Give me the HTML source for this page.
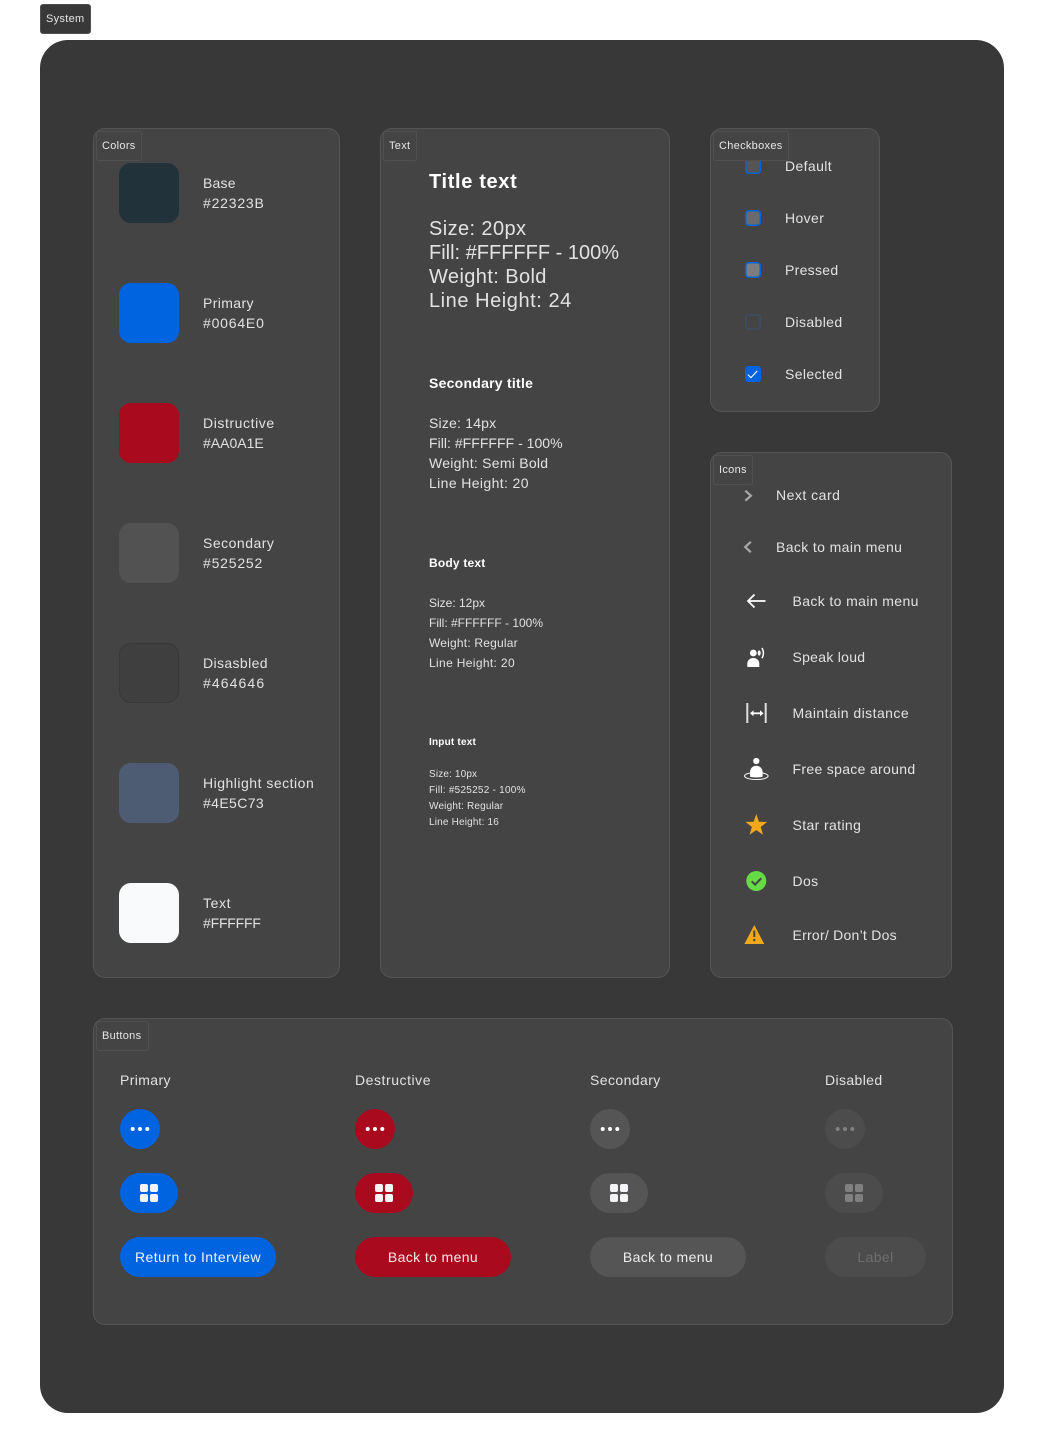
<!DOCTYPE html>
<html lang="en">
<head>
<meta charset="utf-8">
<title>System</title>
<style>
html,body{margin:0;padding:0;background:#fff;}
body{position:relative;width:1044px;height:1453px;overflow:hidden;font-family:"Liberation Sans",sans-serif;}
.a{position:absolute;box-sizing:border-box;}
.outer{left:40px;top:40px;width:964px;height:1373px;background:#383838;border-radius:28px;}
.panel{background:#444;border:1px solid #555;border-radius:12px;}
.tag{font-size:11px;line-height:28px;height:30px;color:#e6e6e6;border:1px solid #505050;border-radius:3px;padding-left:5px;letter-spacing:.3px;background:#444;white-space:nowrap;}
.t{position:absolute;white-space:nowrap;color:#e2e2e2;font-size:14px;line-height:20px;height:20px;letter-spacing:.38px;}
.sw{position:absolute;left:119px;width:60px;height:60px;border-radius:12px;}
.b{position:absolute;height:40px;border-radius:20px;}
.l{position:absolute;height:40px;line-height:40px;font-size:14px;letter-spacing:.38px;white-space:nowrap;text-align:center;}
.h{font-size:20px;line-height:24px;height:24px;}
svg{position:absolute;left:0;top:0;overflow:visible;}
</style>
</head>
<body>
<div class="a tag" style="left:40px;top:4px;width:51px;background:#383838;color:#e6e6e6;">System</div>
<div class="a outer"></div>

<div class="a panel" style="left:93px;top:128px;width:247px;height:850px;"></div>
<div class="a panel" style="left:380px;top:128px;width:290px;height:850px;"></div>
<div class="a panel" style="left:710px;top:128px;width:170px;height:284px;"></div>
<div class="a panel" style="left:710px;top:452px;width:242px;height:526px;"></div>
<div class="a panel" style="left:93px;top:1018px;width:860px;height:307px;"></div>

<!-- Colors -->
<div class="sw" style="top:163px;background:#22323B;"></div>
<div class="sw" style="top:283px;background:#0064E0;"></div>
<div class="sw" style="top:403px;background:#AA0A1E;"></div>
<div class="sw" style="top:523px;background:#525252;"></div>
<div class="sw" style="top:643px;background:#3F3F3F;border:1px solid #383838;box-sizing:border-box;"></div>
<div class="sw" style="top:763px;background:#4E5C73;"></div>
<div class="sw" style="top:883px;background:#F9FAFC;"></div>
<div class="t" style="left:203px;top:173px;letter-spacing:.2px;">Base</div>
<div class="t" style="left:203px;top:193px;letter-spacing:.8px;">#22323B</div>
<div class="t" style="left:203px;top:293px;">Primary</div>
<div class="t" style="left:203px;top:313px;letter-spacing:.8px;">#0064E0</div>
<div class="t" style="left:203px;top:413px;letter-spacing:.58px;">Distructive</div>
<div class="t" style="left:203px;top:433px;letter-spacing:0;">#AA0A1E</div>
<div class="t" style="left:203px;top:533px;letter-spacing:.5px;">Secondary</div>
<div class="t" style="left:203px;top:553px;letter-spacing:.8px;">#525252</div>
<div class="t" style="left:203px;top:653px;">Disasbled</div>
<div class="t" style="left:203px;top:673px;letter-spacing:1.1px;">#464646</div>
<div class="t" style="left:203px;top:773px;letter-spacing:.5px;">Highlight section</div>
<div class="t" style="left:203px;top:793px;">#4E5C73</div>
<div class="t" style="left:203px;top:893px;letter-spacing:.6px;">Text</div>
<div class="t" style="left:203px;top:913px;letter-spacing:-.2px;">#FFFFFF</div>
<div class="a tag" style="left:96px;top:131px;width:46px;">Colors</div>

<!-- Text -->
<div class="a tag" style="left:383px;top:131px;width:34px;">Text</div>
<div class="t h" style="left:429px;top:170px;font-weight:bold;color:#fff;letter-spacing:.65px;">Title text</div>
<div class="t h" style="left:429px;top:217px;letter-spacing:.4px;">Size: 20px</div>
<div class="t h" style="left:429px;top:241px;letter-spacing:0;">Fill: #FFFFFF - 100%</div>
<div class="t h" style="left:429px;top:265px;letter-spacing:.4px;">Weight: Bold</div>
<div class="t h" style="left:429px;top:289px;letter-spacing:.55px;">Line Height: 24</div>
<div class="t" style="left:429px;top:373px;font-weight:bold;color:#fff;letter-spacing:.25px;">Secondary title</div>
<div class="t" style="left:429px;top:413px;letter-spacing:.2px;">Size: 14px</div>
<div class="t" style="left:429px;top:433px;letter-spacing:.03px;">Fill: #FFFFFF - 100%</div>
<div class="t" style="left:429px;top:453px;letter-spacing:.26px;">Weight: Semi Bold</div>
<div class="t" style="left:429px;top:473px;">Line Height: 20</div>
<div class="t" style="left:429px;top:553px;font-size:12px;font-weight:bold;color:#fff;letter-spacing:.2px;">Body text</div>
<div class="t" style="left:429px;top:593px;font-size:12px;letter-spacing:0;">Size: 12px</div>
<div class="t" style="left:429px;top:613px;font-size:12px;letter-spacing:0;">Fill: #FFFFFF - 100%</div>
<div class="t" style="left:429px;top:633px;font-size:12px;letter-spacing:.2px;">Weight: Regular</div>
<div class="t" style="left:429px;top:653px;font-size:12px;letter-spacing:.35px;">Line Height: 20</div>
<div class="t" style="left:429px;top:733px;font-size:10px;font-weight:bold;color:#fff;letter-spacing:.2px;">Input text</div>
<div class="t" style="left:429px;top:765px;font-size:10px;letter-spacing:.15px;">Size: 10px</div>
<div class="t" style="left:429px;top:781px;font-size:10px;letter-spacing:.25px;">Fill: #525252 - 100%</div>
<div class="t" style="left:429px;top:797px;font-size:10px;letter-spacing:.18px;">Weight: Regular</div>
<div class="t" style="left:429px;top:813px;font-size:10px;letter-spacing:.18px;">Line Height: 16</div>

<!-- Checkboxes -->
<svg width="1044" height="1453">
  <rect x="745.75" y="158.75" width="14.5" height="14.5" rx="3" fill="#555" stroke="#0064E0" stroke-width="1.5"/>
  <rect x="745.75" y="210.75" width="14.5" height="14.5" rx="3" fill="#6a6a6a" stroke="#0064E0" stroke-width="1.5"/>
  <rect x="745.75" y="262.75" width="14.5" height="14.5" rx="3" fill="#7d7d7d" stroke="#0064E0" stroke-width="1.5"/>
  <rect x="745.75" y="314.75" width="14.5" height="14.5" rx="3" fill="#444" stroke="#3f4d63" stroke-width="1.5"/>
  <rect x="745" y="366" width="16" height="16" rx="3" fill="#0064E0"/>
  <path d="M747.8 374.6l3.2 3 6.2-6.6" fill="none" stroke="#fff" stroke-width="1.1"/>
</svg>
<div class="a tag" style="left:713px;top:131px;width:76px;">Checkboxes</div>
<div class="t" style="left:785px;top:156px;">Default</div>
<div class="t" style="left:785px;top:208px;">Hover</div>
<div class="t" style="left:785px;top:260px;letter-spacing:.3px;">Pressed</div>
<div class="t" style="left:785px;top:312px;">Disabled</div>
<div class="t" style="left:785px;top:364px;">Selected</div>

<!-- Icons -->
<div class="a tag" style="left:713px;top:455px;width:40px;">Icons</div>
<div class="t" style="left:776px;top:485px;letter-spacing:.5px;">Next card</div>
<div class="t" style="left:776px;top:537px;">Back to main menu</div>
<div class="t" style="left:792.5px;top:591px;">Back to main menu</div>
<div class="t" style="left:792.5px;top:647px;letter-spacing:.28px;">Speak loud</div>
<div class="t" style="left:792.5px;top:703px;letter-spacing:.45px;">Maintain distance</div>
<div class="t" style="left:792.5px;top:759px;letter-spacing:.32px;">Free space around</div>
<div class="t" style="left:792.5px;top:815px;">Star rating</div>
<div class="t" style="left:792.5px;top:871px;">Dos</div>
<div class="t" style="left:792.5px;top:925px;letter-spacing:.25px;">Error/ Don’t Dos</div>
<svg width="1044" height="1453">
  <path d="M745.3 490.7l5.6 5-5.6 5" fill="none" stroke="#a8a8a8" stroke-width="2.2"/>
  <path d="M750.8 541.8l-5.6 5.2 5.600 5.200" fill="none" stroke="#a8a8a8" stroke-width="2.2"/>
  <path d="M765.5 601H748M754.5 594.500L748 601l6.500 6.500" fill="none" stroke="#fff" stroke-width="1.8"/>
  <circle cx="753.3" cy="653" r="3.4" fill="#fff"/>
  <ellipse cx="759.2" cy="653" rx="1.5" ry="2.6" fill="#fff"/>
  <path d="M747.3 667v-3.200c0-3.500 2.700-5.800 6-5.800s6 2.300 6 5.800V667z" fill="#fff"/>
  <path d="M762 648c1.800 3.200 1.800 7 0 10.200" fill="none" stroke="#fff" stroke-width="1.5"/>
  <path d="M747.3 703v20M765.7 703v20" fill="none" stroke="#dedede" stroke-width="2"/>
  <path d="M752 713.3h9.500" fill="none" stroke="#fff" stroke-width="1.800"/>
  <path d="M750 713.3l3.500-3v6zM763.500 713.3l-3.500-3v6z" fill="#fff"/>
  <circle cx="756.3" cy="761" r="3.1" fill="#fff"/>
  <ellipse cx="756.3" cy="776" rx="11.800" ry="3.500" fill="none" stroke="#f0f0f0" stroke-width="1.100"/>
  <path d="M750 776.800v-4.500c0-3.600 2.700-6.500 6.300-6.500s6.300 2.900 6.300 6.500v4.500c-3 .9-9.600.9-12.600 0z" fill="#fff"/>
  <path d="M756.300 814l2.700 7.800 8.200.1-6.500 5.100 2.400 7.800-6.800-4.700-6.800 4.700 2.400-7.800-6.500-5.100 8.200-.1z" fill="#F2A81B"/>
  <circle cx="756.300" cy="881" r="10" fill="#66DB45"/>
  <path d="M751.700 881.300l3.400 3.300 6.200-6.400" fill="none" stroke="#444" stroke-width="2"/>
  <path d="M754.300 925l9.900 19h-19.800z" fill="#F2A81B"/>
  <path d="M754.300 930.500v6.500" stroke="#444" stroke-width="2" fill="none"/>
  <circle cx="754.300" cy="940" r="1.200" fill="#444"/>
</svg>

<!-- Buttons -->
<div class="a tag" style="left:96px;top:1021px;width:53px;">Buttons</div>
<div class="t" style="left:120px;top:1070px;">Primary</div>
<div class="t" style="left:355px;top:1070px;letter-spacing:.55px;">Destructive</div>
<div class="t" style="left:590px;top:1070px;letter-spacing:.42px;">Secondary</div>
<div class="t" style="left:825px;top:1070px;">Disabled</div>

<div class="b" style="left:120px;top:1109px;width:40px;background:#0064E0;"></div>
<div class="b" style="left:355px;top:1109px;width:40px;background:#AA0A1E;"></div>
<div class="b" style="left:590px;top:1109px;width:40px;background:#555;"></div>
<div class="b" style="left:825px;top:1109px;width:40px;background:#4c4c4c;"></div>
<div class="b" style="left:120px;top:1173px;width:58px;background:#0064E0;"></div>
<div class="b" style="left:355px;top:1173px;width:58px;background:#AA0A1E;"></div>
<div class="b" style="left:590px;top:1173px;width:58px;background:#555;"></div>
<div class="b" style="left:825px;top:1173px;width:58px;background:#4c4c4c;"></div>
<div class="b" style="left:120px;top:1237px;width:156px;background:#0064E0;"></div>
<div class="b" style="left:355px;top:1237px;width:156px;background:#AA0A1E;"></div>
<div class="b" style="left:590px;top:1237px;width:156px;background:#555;"></div>
<div class="b" style="left:825px;top:1237px;width:101px;background:#4c4c4c;"></div>
<div class="l" style="left:120px;top:1237px;width:156px;color:#f0f4fa;letter-spacing:.45px;">Return to Interview</div>
<div class="l" style="left:355px;top:1237px;width:156px;color:#f5e8e8;">Back to menu</div>
<div class="l" style="left:590px;top:1237px;width:156px;color:#eee;">Back to menu</div>
<div class="l" style="left:825px;top:1237px;width:101px;color:#6e6e6e;">Label</div>
<svg width="1044" height="1453">
  <g fill="#fff">
    <circle cx="132.700" cy="1129" r="2"/><circle cx="140" cy="1129" r="2"/><circle cx="147.300" cy="1129" r="2"/>
    <circle cx="367.700" cy="1129" r="2"/><circle cx="375" cy="1129" r="2"/><circle cx="382.300" cy="1129" r="2"/>
    <circle cx="602.700" cy="1129" r="2"/><circle cx="610" cy="1129" r="2"/><circle cx="617.300" cy="1129" r="2"/>
  </g>
  <g fill="#808080">
    <circle cx="837.700" cy="1129" r="2"/><circle cx="845" cy="1129" r="2"/><circle cx="852.300" cy="1129" r="2"/>
  </g>
  <g fill="#f4f4f6">
    <rect x="140" y="1184" width="8" height="8" rx="2"/><rect x="150" y="1184" width="8" height="8" rx="2"/><rect x="140" y="1194" width="8" height="8" rx="2"/><rect x="150" y="1194" width="8" height="8" rx="2"/>
    <rect x="375" y="1184" width="8" height="8" rx="2"/><rect x="385" y="1184" width="8" height="8" rx="2"/><rect x="375" y="1194" width="8" height="8" rx="2"/><rect x="385" y="1194" width="8" height="8" rx="2"/>
    <rect x="610" y="1184" width="8" height="8" rx="2"/><rect x="620" y="1184" width="8" height="8" rx="2"/><rect x="610" y="1194" width="8" height="8" rx="2"/><rect x="620" y="1194" width="8" height="8" rx="2"/>
  </g>
  <g fill="#808080">
    <rect x="845" y="1184" width="8" height="8" rx="2"/><rect x="855" y="1184" width="8" height="8" rx="2"/><rect x="845" y="1194" width="8" height="8" rx="2"/><rect x="855" y="1194" width="8" height="8" rx="2"/>
  </g>
</svg>
</body>
</html>
